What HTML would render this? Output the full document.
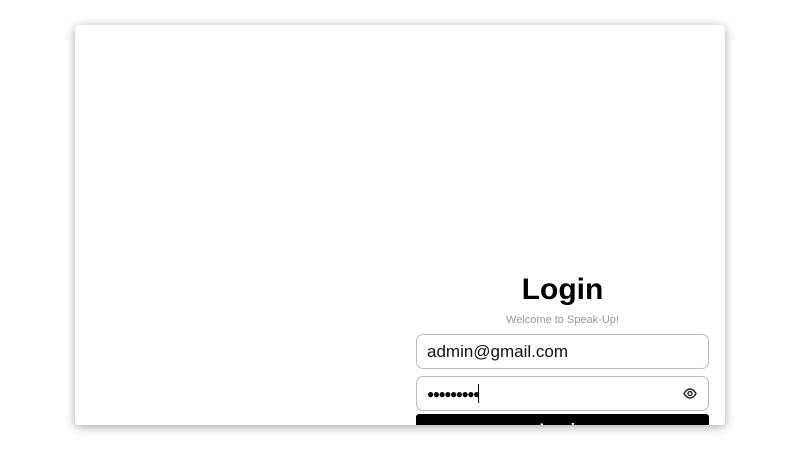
<!DOCTYPE html>
<html><head><style>
html,body{margin:0;padding:0;width:800px;height:450px;background:#fff;overflow:hidden;font-family:"Liberation Sans",Arial,sans-serif}
.card{position:absolute;left:75px;top:25px;width:650px;height:400px;background:#fff;border-radius:4px;box-shadow:0 2px 10px rgba(0,0,0,0.35);overflow:hidden}
.t{position:absolute;left:341px;width:293px;text-align:center}
h1{position:absolute;margin:0;left:341px;width:293px;top:248px;text-align:center;font-size:30px;font-weight:bold;color:#000;line-height:34px}
.sub{top:289px;font-size:11px;color:#999;line-height:13px}
.in{position:absolute;left:341px;width:291px;height:33px;border:1px solid #bbb;border-radius:7px;background:#fff}
.e{top:309px;font-size:17px;line-height:33px;padding-left:10px;box-sizing:border-box;width:293px;height:35px;color:#111}
.p{top:351px;box-sizing:border-box;width:293px;height:35px}
.btn{position:absolute;left:341px;top:389px;width:293px;height:40px;background:#000;border-radius:3px;color:#fff;text-align:center;font-size:17px;line-height:32px;font-weight:bold}
</style></head><body>
<div class="card">
<h1>Login</h1>
<div class="t sub">Welcome to Speak-Up!</div>
<div class="in e">admin@gmail.com</div>
<div class="in p">
<span style="position:absolute;left:10px;top:3px;font-size:12px;letter-spacing:-1.5px;line-height:28px;color:#000">●●●●●●●●●</span>
<span style="position:absolute;left:61px;top:7px;width:1px;height:19px;background:#000"></span>
<svg style="position:absolute;right:11px;top:11px" width="14" height="11" viewBox="0 0 14 11"><path d="M1 5.5C3 2 5 1 7 1s4 1 6 4.5C11 9 9 10 7 10S3 9 1 5.5Z" fill="none" stroke="#222" stroke-width="1.4"/><circle cx="7" cy="5.5" r="2" fill="none" stroke="#222" stroke-width="1.4"/></svg>
</div>
<div class="btn">Login</div>
</div>
</body></html>
